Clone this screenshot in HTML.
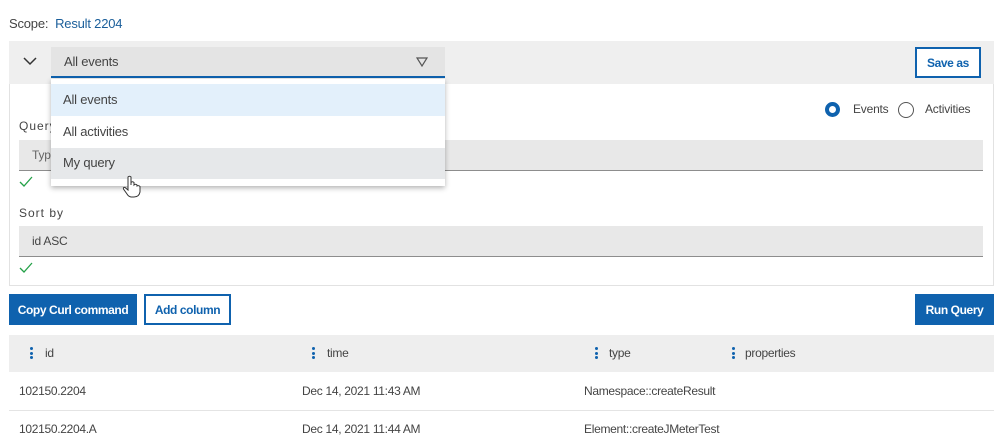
<!DOCTYPE html>
<html><head><meta charset="utf-8"><style>
*{box-sizing:border-box;margin:0;padding:0}
body{width:1005px;height:448px;overflow:hidden;background:#fff;font-family:"Liberation Sans",Arial,sans-serif;font-size:13px;color:#333;position:relative;letter-spacing:-0.2px}
.a{position:absolute}
.btnp{background:#0f62ae;color:#fff;font-weight:bold;font-size:12px;display:flex;align-items:center;justify-content:center;letter-spacing:-0.4px}
.btno{border:2px solid #0f62ae;color:#0f62ae;background:#fff;font-weight:bold;font-size:12px;display:flex;align-items:center;justify-content:center;letter-spacing:-0.4px}
.lbl{font-size:12px;color:#444;letter-spacing:1px}
.inp{background:#e8e8e8;border-bottom:1px solid #8d8d8d}
.dots{width:3px}
.dots i{display:block;width:3px;height:3px;border-radius:50%;background:#0f62ae;margin-bottom:1.5px}
.row{font-size:12px;color:#444;letter-spacing:-0.3px}
</style></head><body>
<div class="a" style="left:9px;top:16px;font-size:13px;color:#444">Scope:&nbsp;&nbsp;<span style="color:#1a5e9a">Result 2204</span></div>

<div class="a" style="left:9px;top:41px;width:985px;height:245px;border:1px solid #e2e2e2"></div>
<div class="a" style="left:9px;top:41px;width:985px;height:43px;background:#efefef"></div>
<svg class="a" style="left:23px;top:56px" width="14" height="10"><path d="M1 2 L7 8 L13 2" fill="none" stroke="#333" stroke-width="1.5"/></svg>
<div class="a" style="left:51px;top:47px;width:394px;height:31px;background:#e4e4e4;border-bottom:2px solid #0f62ae"></div>
<div class="a" style="left:64px;top:54px;font-size:13px;color:#444">All events</div>
<svg class="a" style="left:416px;top:57px" width="12" height="10"><path d="M1 1 L11 1 L6 9 Z" fill="none" stroke="#555" stroke-width="1.2"/></svg>
<div class="a btno" style="left:915px;top:47px;width:66px;height:31px">Save as</div>

<div class="a" style="left:825px;top:102px;width:15px;height:15px;border-radius:50%;border:4.5px solid #0f62ae"></div>
<div class="a" style="left:853px;top:102px;font-size:12px;color:#444">Events</div>
<div class="a" style="left:898px;top:102px;width:16px;height:16px;border-radius:50%;border:1.5px solid #555"></div>
<div class="a" style="left:925px;top:102px;font-size:12px;color:#444">Activities</div>

<div class="a lbl" style="left:19px;top:119px">Query</div>
<div class="a inp" style="left:19px;top:140px;width:964px;height:31px"></div>
<div class="a" style="left:32px;top:148px;font-size:12px;color:#666">Typ</div>
<svg class="a" style="left:19px;top:176px" width="14" height="11"><path d="M1 6 L5 10 L13 1" fill="none" stroke="#24a148" stroke-width="1.3"/></svg>

<div class="a lbl" style="left:19px;top:206px">Sort by</div>
<div class="a inp" style="left:19px;top:226px;width:964px;height:31px"></div>
<div class="a" style="left:32px;top:234px;font-size:12px;color:#444">id ASC</div>
<svg class="a" style="left:19px;top:262px" width="14" height="11"><path d="M1 6 L5 10 L13 1" fill="none" stroke="#24a148" stroke-width="1.3"/></svg>

<div class="a" style="left:51px;top:79px;width:394px;height:107px;background:#fff;box-shadow:0 2px 5px rgba(0,0,0,.3)"></div>
<div class="a" style="left:51px;top:84px;width:394px;height:32px;background:#e3f0fb"></div>
<div class="a" style="left:63px;top:92px;font-size:13px;color:#444">All events</div>
<div class="a" style="left:63px;top:124px;font-size:13px;color:#444">All activities</div>
<div class="a" style="left:51px;top:148px;width:394px;height:31px;background:#e6e8ea"></div>
<div class="a" style="left:63px;top:155px;font-size:13px;color:#444">My query</div>
<svg class="a" style="left:122px;top:175px" width="20" height="24" viewBox="0 0 20 24"><path d="M6 2 Q7.5 0.5 9 2 L9 10 L9 7.5 Q10.5 6 12 7.5 L12 10 Q13.5 8.5 15 10 L15 11 Q16.5 10 18 11.5 L18 17 Q17 22 12 22 L9 22 Q6.5 21.5 5 19 L1.5 14 Q1 12 3 12.5 L6 15 Z" fill="#fff" stroke="#333" stroke-width="1"/></svg>

<div class="a btnp" style="left:9px;top:294px;width:128px;height:31px">Copy Curl command</div>
<div class="a btno" style="left:144px;top:294px;width:87px;height:31px">Add column</div>
<div class="a btnp" style="left:915px;top:294px;width:79px;height:31px">Run Query</div>

<div class="a" style="left:9px;top:335px;width:985px;height:37px;background:#eeeeee"></div>
<div class="a dots" style="left:30px;top:347px"><i></i><i></i><i></i></div>
<div class="a row" style="left:45px;top:346px">id</div>
<div class="a dots" style="left:312px;top:347px"><i></i><i></i><i></i></div>
<div class="a row" style="left:327px;top:346px">time</div>
<div class="a dots" style="left:595px;top:347px"><i></i><i></i><i></i></div>
<div class="a row" style="left:609px;top:346px">type</div>
<div class="a dots" style="left:732px;top:347px"><i></i><i></i><i></i></div>
<div class="a row" style="left:745px;top:346px">properties</div>

<div class="a" style="left:9px;top:410px;width:985px;height:1px;background:#e4e4e4"></div>
<div class="a row" style="left:19px;top:384px">102150.2204</div>
<div class="a row" style="left:302px;top:384px">Dec 14, 2021 11:43 AM</div>
<div class="a row" style="left:584px;top:384px">Namespace::createResult</div>
<div class="a row" style="left:19px;top:422px">102150.2204.A</div>
<div class="a row" style="left:302px;top:422px">Dec 14, 2021 11:44 AM</div>
<div class="a row" style="left:584px;top:422px">Element::createJMeterTest</div>
</body></html>
